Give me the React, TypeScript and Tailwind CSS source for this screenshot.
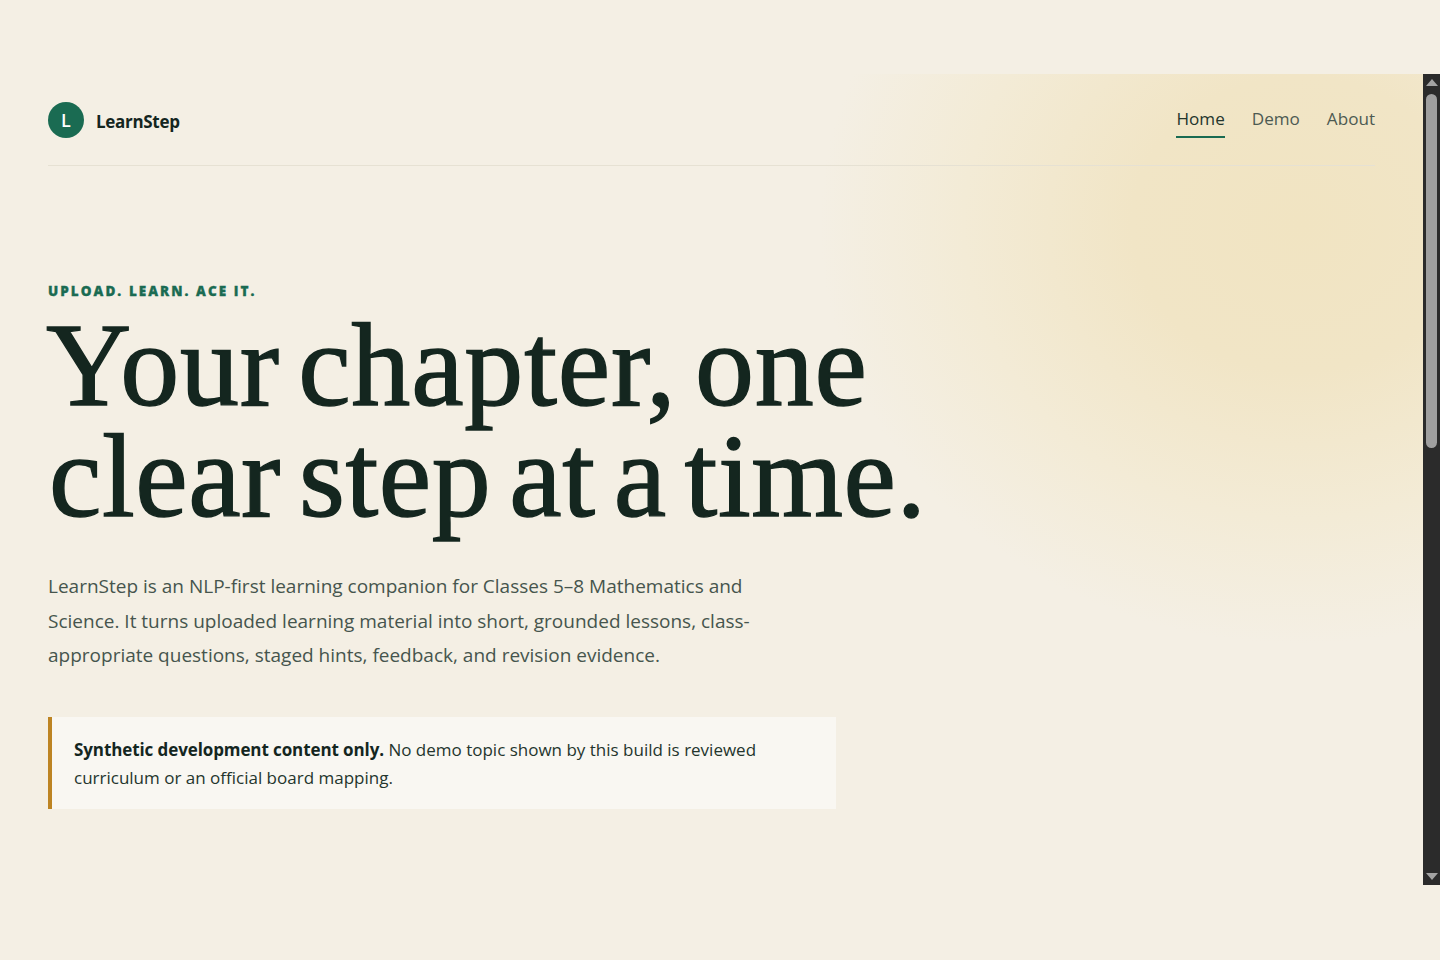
import React from 'react';

const sans = "font-['Open_Sans','Noto_Sans',sans-serif]";

const App: React.FC = () => {
    return (
        <div className={`h-[960px] overflow-hidden bg-[#f4efe4] pt-[74px] ${sans}`}>
            <div className="flex h-[811px]">
                {/* Page */}
                <div className="flex-grow bg-[radial-gradient(ellipse_480px_420px_at_1300px_150px,#f1e4c2_0%,#f1e5c6_35%,#f3ebd6_70%,#f4efe4_100%)]">
                    <div className="px-12 pt-[28px]">
                        <header className="flex items-start justify-between h-[64px] border-b border-[#e6e1d3]">
                            <div className="flex items-center gap-3 text-[#14261f]">
                                <div className="w-9 h-9 rounded-full bg-[#1a6b52] flex items-center justify-center text-white text-[18px] font-semibold pt-px">L</div>
                                <span className="text-[17px] font-bold tracking-[-0.3px] pt-1">LearnStep</span>
                            </div>
                            <nav className="flex gap-[27px] text-[17.1px] text-[#4d5a52]">
                                <a className="h-[36px] pt-[5px] leading-6 text-[#24352d] border-b-2 border-[#1a6b52]">Home</a>
                                <a className="h-[36px] pt-[5px] leading-6">Demo</a>
                                <a className="h-[36px] pt-[5px] leading-6">About</a>
                            </nav>
                        </header>

                        <p className="mt-[115px] text-[13.5px] leading-5 font-extrabold tracking-[2.05px] uppercase text-[#1a6b52] [-webkit-text-stroke:0.3px_#1a6b52]">Upload. Learn. Ace it.</p>
                        <h1 className="mt-[9px] -ml-[2px] font-['Liberation_Serif',serif] text-[118px] leading-[111px] font-normal text-[#14261f] [word-spacing:-12px] [-webkit-text-stroke:1.4px_#14261f]">
                            <span className="block tracking-[0.8px]">Your chapter, one</span>
                            <span className="block tracking-[0.55px] ml-[3px]">clear step at a time.</span>
                        </h1>
                        <p className="mt-[37px] w-[760px] text-[19px] leading-[34.6px] text-[#46554d]">
                            LearnStep is an NLP-first learning companion for Classes 5–8 Mathematics and Science. It turns uploaded learning material into short, grounded lessons, class-appropriate questions, staged hints, feedback, and revision evidence.
                        </p>
                        <div className="mt-[44px] w-[788px] h-[92px] bg-[#f9f7f2] border-l-4 border-[#bd8423] pl-[22px] pr-[40px] py-[19px] text-[17px] leading-[28px] text-[#24352d]">
                            <strong className="font-bold tracking-[-0.1px] text-[#14261f]">Synthetic development content only.</strong> No demo topic shown by this build is reviewed curriculum or an official board mapping.
                        </div>
                    </div>
                </div>

                {/* Scrollbar */}
                <div className="w-[17px] flex-none bg-[#2b2b2b] flex flex-col items-center">
                    <div className="mt-[5px] w-0 h-0 border-x-[6px] border-x-transparent border-b-[7px] border-b-[#a3a3a3]" />
                    <div className="mt-[8px] w-[11px] h-[354px] rounded-[6px] bg-[#9f9f9f]" />
                    <div className="mt-auto mb-[5px] w-0 h-0 border-x-[6px] border-x-transparent border-t-[7px] border-t-[#a3a3a3]" />
                </div>
            </div>
        </div>
    );
};

export default App;
